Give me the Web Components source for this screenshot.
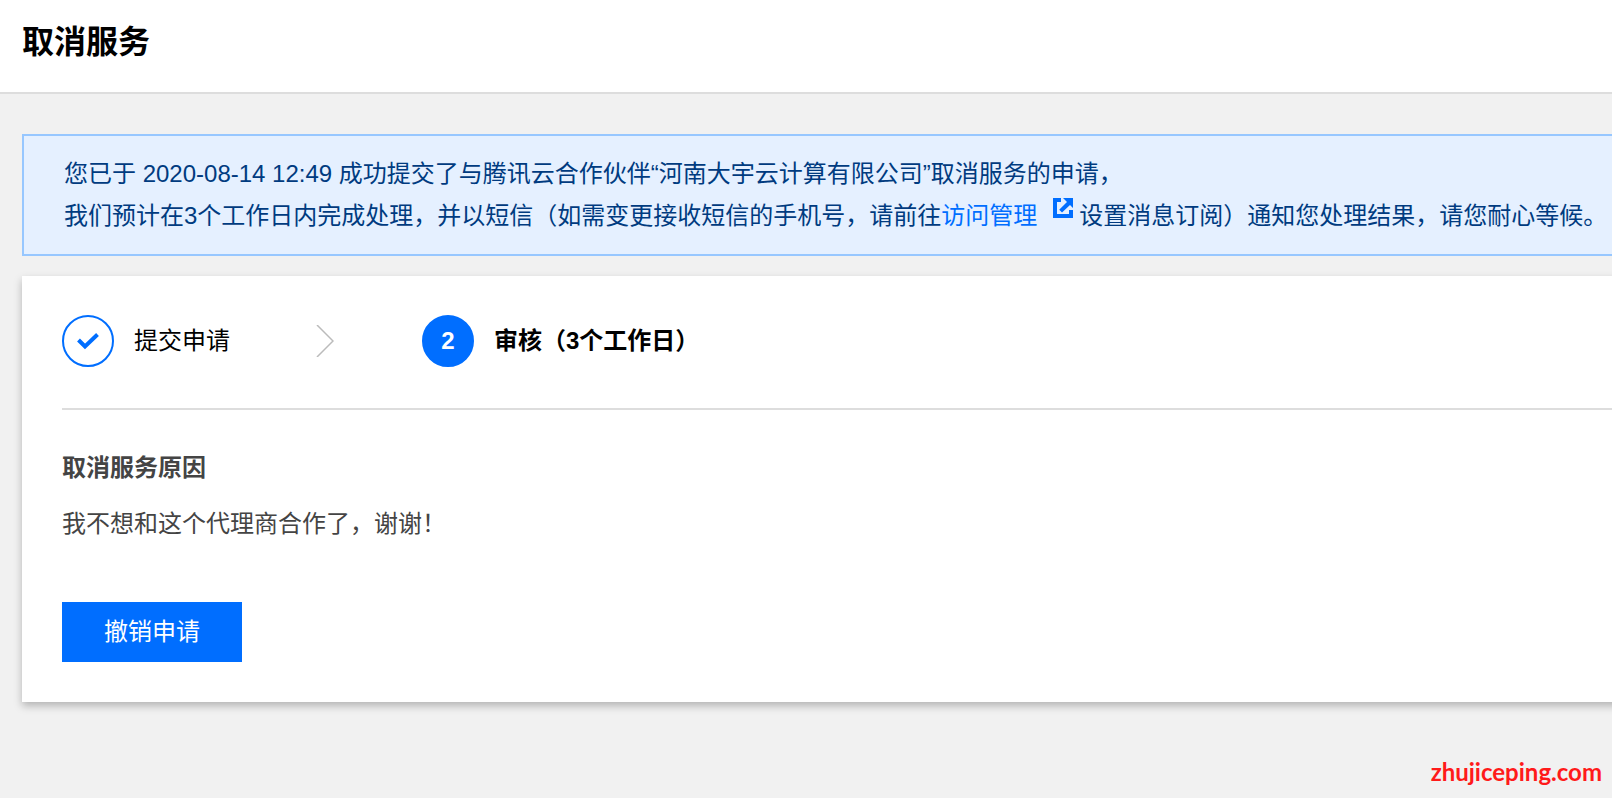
<!DOCTYPE html>
<html lang="zh-CN">
<head>
<meta charset="UTF-8">
<meta name="viewport" content="width=device-width, initial-scale=1.0">
<title>取消服务</title>
<style>
    body {
        margin: 0;
        min-height: 100vh;
        background-color: #f1f1f1;
        color: #000000;
        font-family: "Liberation Sans", "Noto Sans CJK SC", sans-serif;
        font-size: 24px;
        line-height: 36px;
    }
</style>
</head>
<body>
<cancel-page></cancel-page>

<script>
// 根据模板创建shadow root
function render(host, html) {
    const shadow = host.attachShadow({mode: 'open'});
    const template = document.createElement('template');
    template.innerHTML = html.trim();
    shadow.appendChild(template.content.cloneNode(true));
}

// 页面标题栏
class PageHeader extends HTMLElement {
    constructor() {
        super();
        render(this, `
            <style>
                :host {
                    display: block;
                    padding: 22px 22px 30px;
                    background-color: #ffffff;
                    border-bottom: 2px solid #dddddd;
                }

                h1 {
                    margin: 0;
                    font-size: 32px;
                    line-height: 40px;
                }
            </style>
            <h1><slot></slot></h1>
        `);
    }
}

// 蓝色提示框
class NoticeBar extends HTMLElement {
    constructor() {
        super();
        render(this, `
            <style>
                :host {
                    display: block;
                    padding: 17px 0 17px 40px;
                    background-color: #e5f0ff;
                    border: 2px solid #97c7ff;
                    border-right: 0;
                    color: #003b80;
                    line-height: 42px;
                }
            </style>
            <slot></slot>
        `);
    }
}

// 带外部跳转图标的链接, 行内元素之间不能留空白
class ExternalLink extends HTMLElement {
    constructor() {
        super();
        render(this, `
            <style>
                :host {
                    display: inline;
                }

                a {
                    color: #006eff;
                    text-decoration: none;
                }

                a:hover {
                    text-decoration: underline;
                }

                svg {
                    width: 20px;
                    height: 20px;
                    margin: 0 6px 0 16px;
                    vertical-align: 6px;
                }
            </style><a href="${this.getAttribute('href')}"><slot></slot><svg viewBox="0 0 20 20" aria-hidden="true">
                <path fill="#006eff" d="M0 0h8v4H4v12h12v-4h4v8H0z"/>
                <path fill="#006eff" d="M10 0h10v10l-3-3-8 7.500L6.200 11.700 14 4z"/>
            </svg></a>
        `);
    }
}

// 单个步骤, state: done | current
class StepItem extends HTMLElement {
    constructor() {
        super();
        render(this, `
            <style>
                :host {
                    display: flex;
                    align-items: center;
                    gap: 20px;
                }

                .step-icon {
                    display: flex;
                    align-items: center;
                    justify-content: center;
                    box-sizing: border-box;
                    width: 52px;
                    height: 52px;
                    border: 2px solid #006eff;
                    border-radius: 50%;
                    color: #ffffff;
                }

                :host([state="current"]) {
                    font-weight: bold;
                }

                :host([state="current"]) .step-icon {
                    background-color: #006eff;
                }

                svg {
                    width: 24px;
                    height: 20px;
                }
            </style>
            <span class="step-icon"><slot name="icon"><svg viewBox="0 0 24 20" aria-hidden="true">
                <path d="M2.5 9L9 15.500 21.5 3.500" fill="none" stroke="#006eff" stroke-width="4"/>
            </svg></slot></span>
            <span><slot></slot></span>
        `);
    }
}

// 步骤条
class StepBar extends HTMLElement {
    constructor() {
        super();
        render(this, `
            <style>
                :host {
                    display: flex;
                    align-items: center;
                    padding: 39px 0 41px;
                    border-bottom: 2px solid #dddddd;
                }

                svg {
                    width: 18px;
                    height: 32px;
                    margin: 0 88px 0 86px;
                }
            </style>
            <slot name="first"></slot>
            <svg viewBox="0 0 18 32" aria-hidden="true">
                <path d="M1 0l16 16L1 32" fill="none" stroke="#bbbbbb" stroke-width="1.500"/>
            </svg>
            <slot name="second"></slot>
        `);
    }
}

// 内容卡片
class ContentCard extends HTMLElement {
    constructor() {
        super();
        render(this, `
            <style>
                :host {
                    display: block;
                    margin-right: -20px;
                    padding: 0 20px 40px 40px;
                    background-color: #ffffff;
                    box-shadow: 0 4px 8px rgba(0, 0, 0, 0.25);
                }
            </style>
            <slot></slot>
        `);
    }
}

// 取消服务原因
class CancelReason extends HTMLElement {
    constructor() {
        super();
        render(this, `
            <style>
                :host {
                    display: block;
                    padding: 40px 0 60px;
                    color: #444444;
                }

                h2 {
                    margin: 0 0 20px;
                    font-size: 24px;
                }

                p {
                    margin: 0;
                }
            </style>
            <h2><slot name="title"></slot></h2>
            <p><slot></slot></p>
        `);
    }
}

// 主按钮
class PrimaryButton extends HTMLElement {
    constructor() {
        super();
        render(this, `
            <style>
                :host {
                    display: block;
                }

                button {
                    display: block;
                    min-width: 180px;
                    height: 60px;
                    padding: 0 40px;
                    border: none;
                    background-color: #006eff;
                    color: #ffffff;
                    font: inherit;
                    cursor: pointer;
                }

                button:hover {
                    background-color: #0063e5;
                }
            </style>
            <button type="button"><slot></slot></button>
        `);
    }
}

// 右下角站点名
class SiteMark extends HTMLElement {
    constructor() {
        super();
        render(this, `
            <style>
                :host {
                    display: block;
                    padding: 0 10px 8px;
                    color: #ff1a1a;
                    font-family: "Comic Sans MS", Lato, sans-serif;
                    font-weight: bold;
                    text-align: right;
                }
            </style>
            <slot></slot>
        `);
    }
}

// 整个页面
class CancelPage extends HTMLElement {
    constructor() {
        super();
        render(this, `
            <style>
                :host {
                    display: flex;
                    flex-direction: column;
                    min-height: 100vh;
                    overflow-x: hidden;
                }

                main {
                    display: flex;
                    flex: 1;
                    flex-direction: column;
                    gap: 20px;
                    padding: 40px 0 40px 22px;
                }
            </style>
            <page-header>取消服务</page-header>
            <main>
                <notice-bar>您已于 2020-08-14 12:49 成功提交了与腾讯云合作伙伴“河南大宇云计算有限公司”取消服务的申请，<br>我们预计在3个工作日内完成处理，并以短信（如需变更接收短信的手机号，请前往<external-link href="#">访问管理</external-link>设置消息订阅）通知您处理结果，请您耐心等候。</notice-bar>
                <content-card>
                    <step-bar>
                        <step-item slot="first" state="done">提交申请</step-item>
                        <step-item slot="second" state="current"><span slot="icon">2</span>审核（3个工作日）</step-item>
                    </step-bar>
                    <cancel-reason><span slot="title">取消服务原因</span>我不想和这个代理商合作了，谢谢！</cancel-reason>
                    <primary-button>撤销申请</primary-button>
                </content-card>
            </main>
            <site-mark>zhujiceping.com</site-mark>
        `);
    }
}

// 注册自定义元素
customElements.define('page-header', PageHeader);
customElements.define('notice-bar', NoticeBar);
customElements.define('external-link', ExternalLink);
customElements.define('step-item', StepItem);
customElements.define('step-bar', StepBar);
customElements.define('content-card', ContentCard);
customElements.define('cancel-reason', CancelReason);
customElements.define('primary-button', PrimaryButton);
customElements.define('site-mark', SiteMark);
customElements.define('cancel-page', CancelPage);
</script>
</body>
</html>
